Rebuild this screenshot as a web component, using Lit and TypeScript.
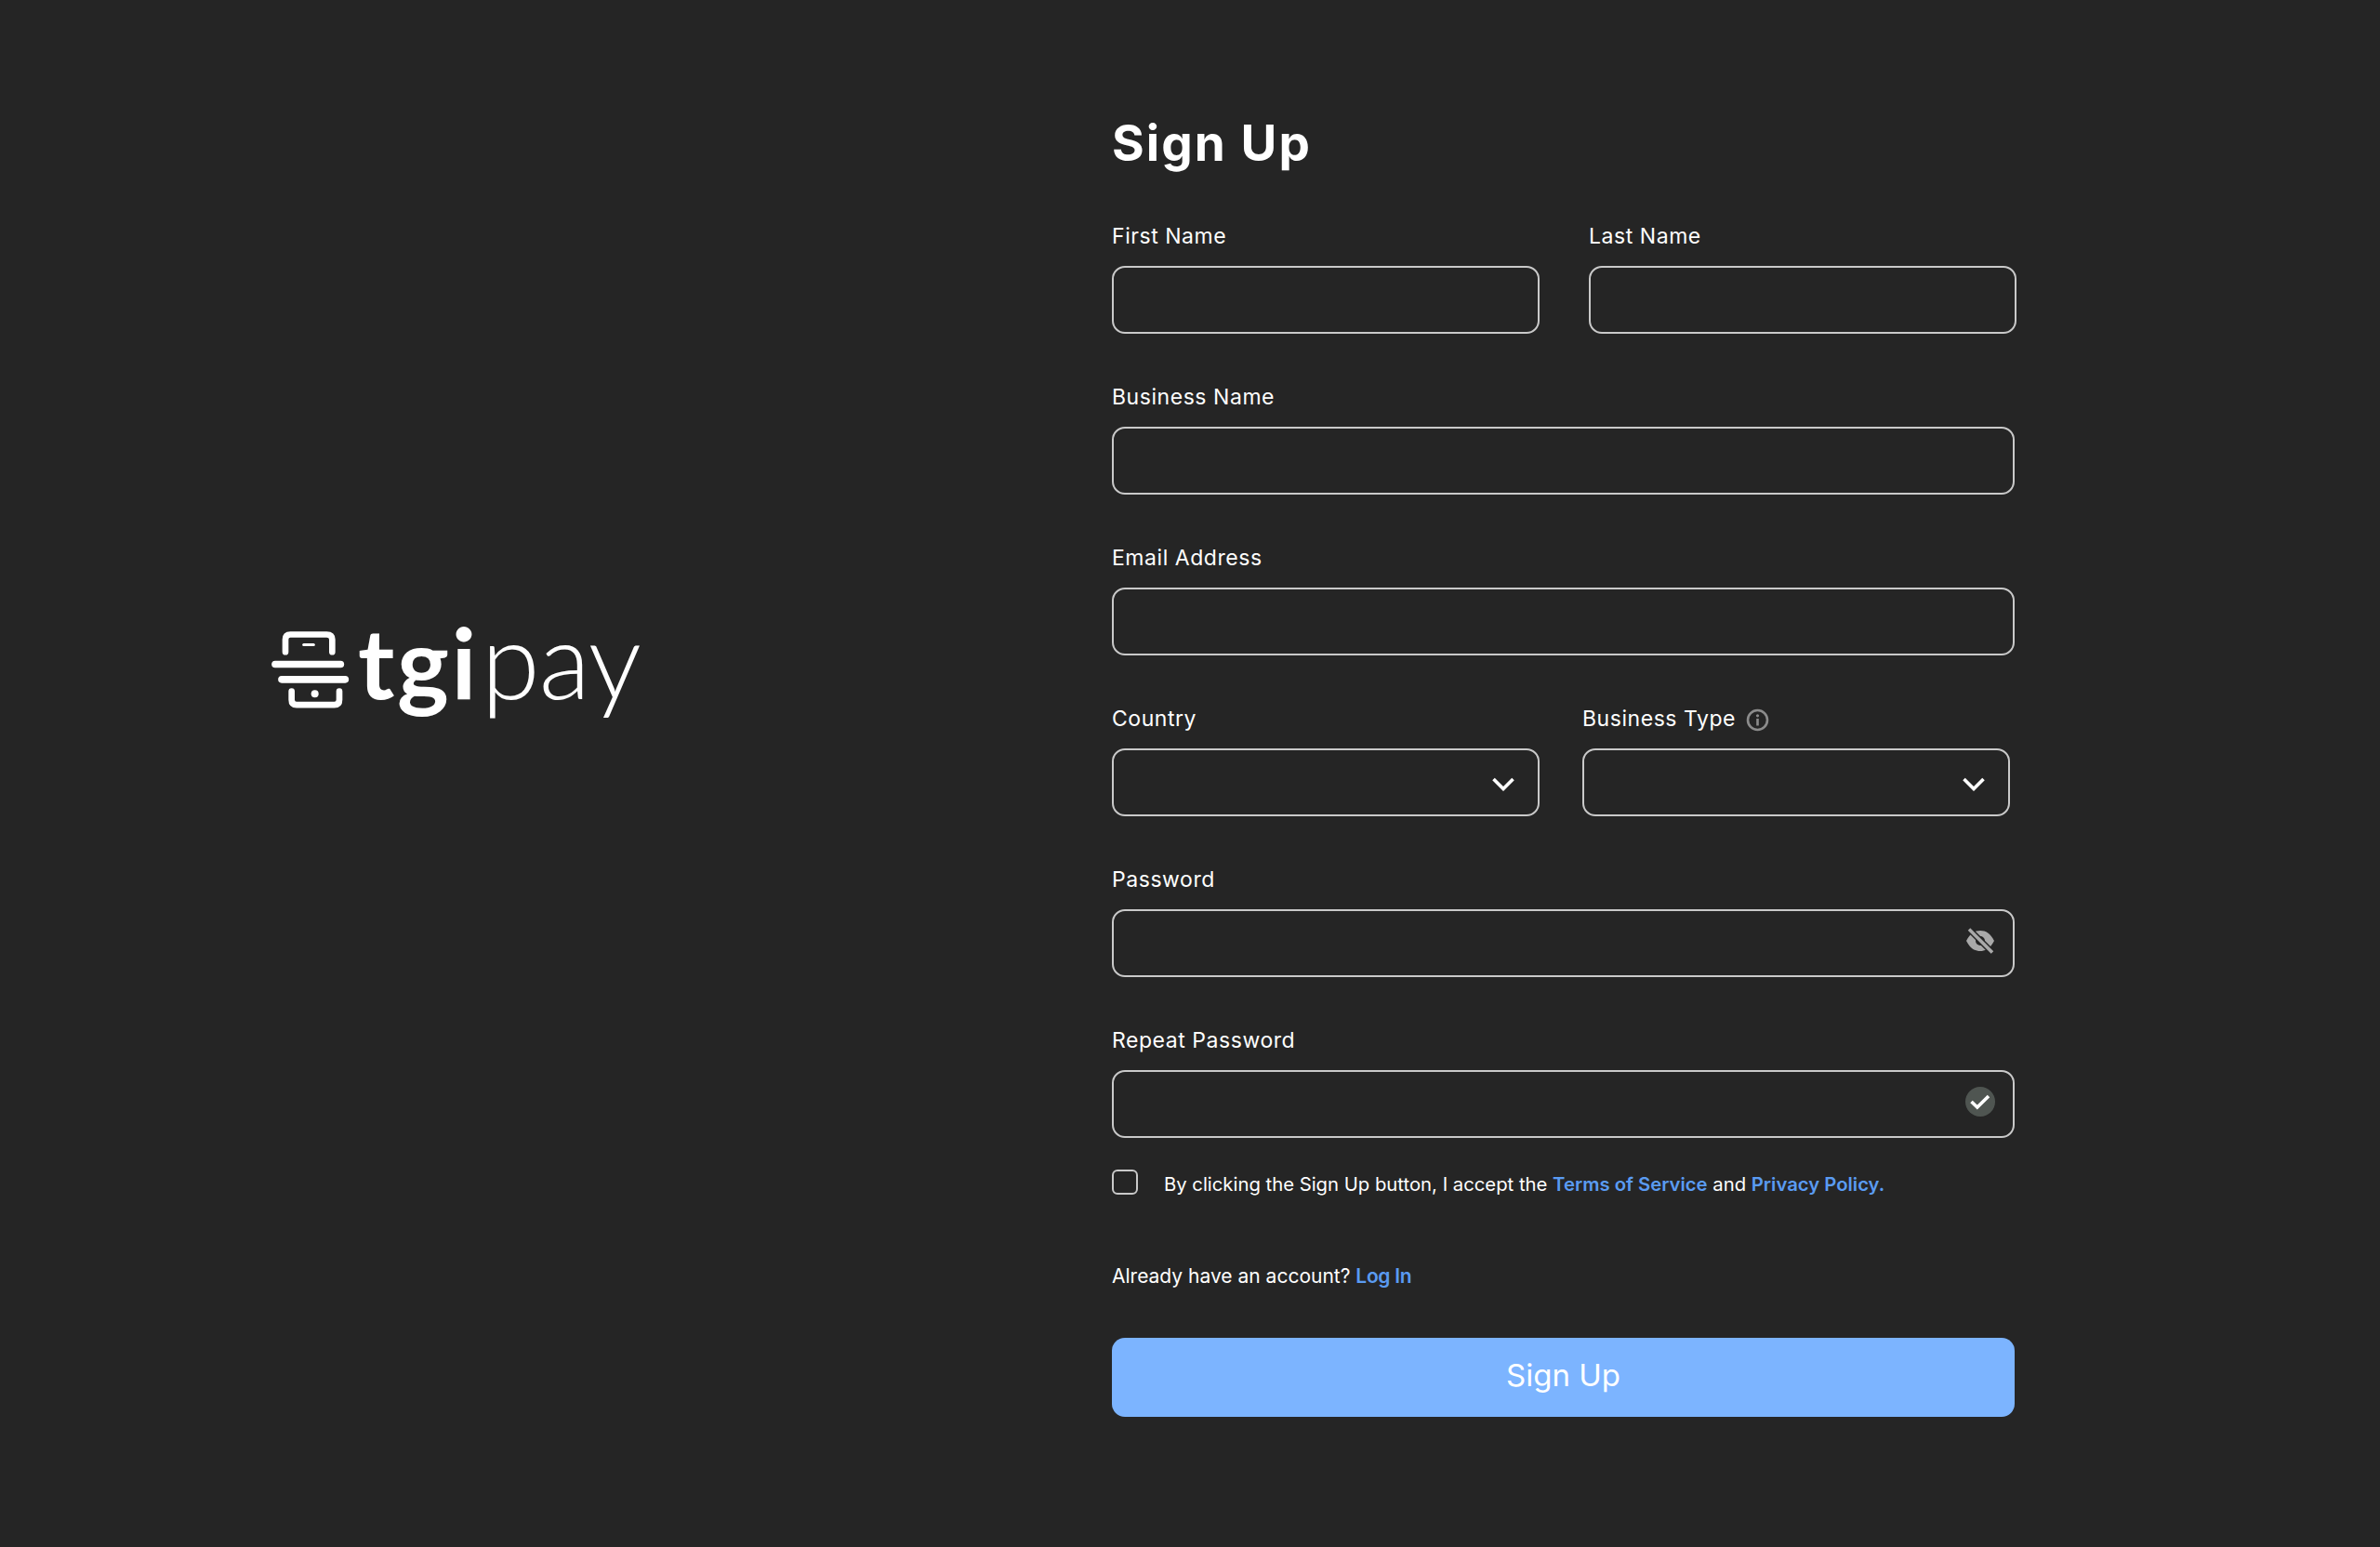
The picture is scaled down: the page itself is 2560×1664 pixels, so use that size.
import { LitElement, html, css } from "lit";
import { customElement } from "lit/decorators.js";

const chevron = html`<svg class="chev" viewBox="0 0 24 15" width="24" height="15" fill="none" stroke="#fff" stroke-width="3.6" stroke-linejoin="miter"><path d="M1.5 2 L12 12.5 L22.5 2"/></svg>`;

@customElement("app-root")
export class AppRoot extends LitElement {
  static styles = css`
    :host { display: block; width: 2560px; height: 1664px; background: #252525; color: #fff; font-family: Inter, "Liberation Sans", sans-serif; overflow: hidden; }
    * { box-sizing: border-box; }
    .page { display: flex; height: 1664px; }
    .brand { width: 1196px; flex: none; padding: 675px 0 0 292px; }
    .logo { display: flex; align-items: flex-start; }
    .mark { flex: none; margin: 2px 9px 0 0; display: block; }
    .word { display: flex; align-items: baseline; height: 110px; line-height: 66px; font-size: 114px; color: #fff; font-family: Lato, Inter, sans-serif; }
    .tgi { font-weight: 700; font-size: 106px; letter-spacing: 2.5px; }
    .pay { font-weight: 300; letter-spacing: -1px; margin-left: 3px; }
    form { width: 973px; padding-top: 116px; display: flex; flex-direction: column; }
    h1 { margin: 0 0 44px; font-size: 53px; line-height: 76px; font-weight: 700; letter-spacing: 2.1px; }
    .row { display: flex; gap: 53px; margin-bottom: 50px; width: 973px; }
    .row.full { width: 971px; }
    .row.tight { gap: 46px; width: 966px; }
    .group { flex: 1 1 0; min-width: 0; display: flex; flex-direction: column; }
    label.lbl { display: flex; align-items: center; height: 36px; margin-bottom: 14px; font-size: 23px; font-weight: 400; letter-spacing: .55px; gap: 11px; }
    .info { margin-top: 2px; }
    .field { height: 73px; border: 2px solid #c9c9c9; border-radius: 14px; display: flex; align-items: center; padding-right: 19px; }
    .field input, .field select { flex: 1; min-width: 0; height: 100%; background: transparent; border: 0; outline: 0; color: #fff; font: inherit; appearance: none; padding: 0 18px; }
    .sel { padding-right: 25px; }
    .chev { flex: none; margin-top: 3px; }
    .eye, .ok { flex: none; margin-top: -6px; }
    .consent { display: flex; align-items: center; gap: 28px; height: 32px; margin-top: -17px; font-size: 20.3px; }
    .box { width: 28px; height: 27px; flex: none; margin: -3px 0 0; appearance: none; background: transparent; border: 2px solid #c9c9c9; border-radius: 6px; }
    a { color: #5a9bf2; font-weight: 600; text-decoration: none; }
    .login { margin-top: 68px; height: 32px; line-height: 32px; font-size: 21px; }
    .login a { letter-spacing: -.3px; }
    button { margin-top: 50px; height: 85px; width: 971px; border: 0; border-radius: 14px; background: #7cb4ff; color: #fff; font: 400 33px Inter, sans-serif; padding: 0 0 5px; }
  `;

  field(label: string, extra?: unknown) {
    return html`<div class="group"><label class="lbl">${label}</label><div class="field"><input type="text" />${extra ?? ""}</div></div>`;
  }

  select(label: string, info = false) {
    return html`<div class="group"><label class="lbl">${label}${info ? html`<svg class="info" width="25" height="25" viewBox="0 0 25 25" fill="none"><circle cx="12.5" cy="12.5" r="10.5" stroke="#8c8c8c" stroke-width="2.6"/><rect x="11.2" y="11" width="2.6" height="7.5" fill="#8c8c8c"/><circle cx="12.5" cy="7.8" r="1.6" fill="#8c8c8c"/></svg>` : ""}</label><div class="field sel"><select></select>${chevron}</div></div>`;
  }

  render() {
    const eye = html`<svg class="eye" width="32" height="28" viewBox="0 0 32 28" fill="none"><path fill-rule="evenodd" d="M1 14 C5 6 10 3 16 3 C22 3 27 6 31 14 C27 22 22 25 16 25 C10 25 5 22 1 14 Z M16 9 A5 5 0 1 0 16 19 A5 5 0 1 0 16 9 Z" fill="#a9a9a9"/><path d="M4 1.5 L29 26.5" stroke="#252525" stroke-width="6.5"/><path d="M4 1.5 L29 26.5" stroke="#a9a9a9" stroke-width="3.6"/></svg>`;
    const ok = html`<svg class="ok" width="32" height="32" viewBox="0 0 32 32" fill="none"><circle cx="16" cy="16" r="16" fill="#4f5551"/><path d="M6.5 16 L12.8 22 L25 10" stroke="#fff" stroke-width="3.6"/></svg>`;
    return html`<div class="page">
      <div class="brand">
        <div class="logo">
          <svg class="mark" width="84" height="87" viewBox="66 80 252 260" fill="none" stroke="#fff" stroke-linecap="round" stroke-linejoin="round" aria-label="tgipay mark">
            <path d="M111 152 V112 Q111 96 127 96 H244 Q262 96 262 112 V152" stroke-width="20"/>
            <path d="M170 129 H202" stroke-width="9"/>
            <path d="M78 192 H289" stroke-width="23"/>
            <path d="M99 241 H304" stroke-width="23"/>
            <path d="M131 279 V307 Q131 323 147 323 H269 Q285 323 285 307 V279" stroke-width="20"/>
            <circle cx="206" cy="287" r="12" fill="#fff" stroke="none"/>
          </svg>
          <div class="word"><span class="tgi">tgi</span><span class="pay">pay</span></div>
        </div>
      </div>
      <form>
        <h1>Sign Up</h1>
        <div class="row">${this.field("First Name")}${this.field("Last Name")}</div>
        <div class="row full">${this.field("Business Name")}</div>
        <div class="row full">${this.field("Email Address")}</div>
        <div class="row tight">${this.select("Country")}${this.select("Business Type", true)}</div>
        <div class="row full">${this.field("Password", eye)}</div>
        <div class="row full">${this.field("Repeat Password", ok)}</div>
        <div class="consent"><input class="box" type="checkbox" /><span>By clicking the Sign Up button, I accept the <a>Terms of Service</a> and <a>Privacy Policy.</a></span></div>
        <div class="login">Already have an account? <a>Log In</a></div>
        <button type="button">Sign Up</button>
      </form>
    </div>`;
  }
}
